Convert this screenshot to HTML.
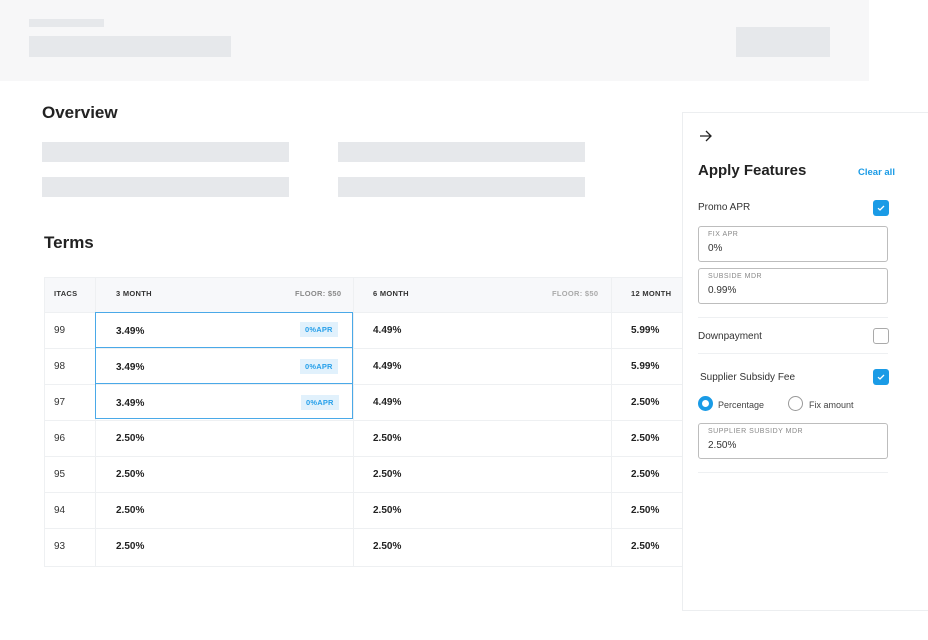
<!DOCTYPE html>
<html><head><style>
*{margin:0;padding:0;box-sizing:border-box}
body{width:928px;height:640px;background:#fff;font-family:"Liberation Sans",sans-serif;color:#222;position:relative;overflow:hidden}
.a{position:absolute}
.ph{position:absolute;background:#e6e8eb}
.cell{position:absolute;font-size:10px;color:#333}
.b{font-weight:bold;color:#222}
.hd{font-size:7.5px;font-weight:bold;letter-spacing:.3px}
.tag{position:absolute;background:#e1f1fc;color:#27a0ea;font-size:7.5px;font-weight:bold;padding:3px 5px;letter-spacing:.2px}
.hl{position:absolute;height:1px;background:#eef0f2}
.vl{position:absolute;width:1px;background:#eef0f2}
.inp{position:absolute;left:698px;width:190px;border:1px solid #bdbdbd;border-radius:3px}
.inp .l{position:absolute;left:9px;top:4px;font-size:7px;color:#888;letter-spacing:.5px}
.inp .v{position:absolute;left:9px;top:16px;font-size:10px;color:#333}
.cb{position:absolute;left:873px;width:16px;height:16px;border-radius:3px;background:#1a9be6}
</style></head><body>
<div class="a" style="left:0;top:0;width:869px;height:81px;background:#f7f7f8"></div>
<div class="ph" style="left:29px;top:19px;width:75px;height:8px"></div>
<div class="ph" style="left:29px;top:36px;width:202px;height:21px"></div>
<div class="ph" style="left:736px;top:27px;width:94px;height:30px"></div>

<div class="a b" style="left:42px;top:103px;font-size:17px">Overview</div>
<div class="ph" style="left:42px;top:142px;width:247px;height:20px"></div>
<div class="ph" style="left:338px;top:142px;width:247px;height:20px"></div>
<div class="ph" style="left:42px;top:177px;width:247px;height:20px"></div>
<div class="ph" style="left:338px;top:177px;width:247px;height:20px"></div>

<div class="a b" style="left:44px;top:233px;font-size:17px">Terms</div>

<div class="a" style="left:44px;top:277px;width:640px;height:35px;background:#f7f8fa"></div>
<div class="hl" style="left:44px;top:277px;width:640px"></div>
<div class="vl" style="left:44px;top:277px;height:290px"></div>
<div class="vl" style="left:95px;top:277px;height:290px"></div>
<div class="vl" style="left:353px;top:277px;height:290px"></div>
<div class="vl" style="left:611px;top:277px;height:290px"></div>
<div class="hl" style="left:44px;top:312px;width:640px"></div>
<div class="hl" style="left:44px;top:348px;width:640px"></div>
<div class="hl" style="left:44px;top:384px;width:640px"></div>
<div class="hl" style="left:44px;top:420px;width:640px"></div>
<div class="hl" style="left:44px;top:456px;width:640px"></div>
<div class="hl" style="left:44px;top:492px;width:640px"></div>
<div class="hl" style="left:44px;top:528px;width:640px"></div>
<div class="hl" style="left:44px;top:566px;width:640px"></div>

<div class="cell hd" style="left:54px;top:289px">ITACS</div>
<div class="cell hd" style="left:116px;top:289px">3 MONTH</div>
<div class="cell hd" style="left:295px;top:289px;color:#888">FLOOR: $50</div>
<div class="cell hd" style="left:373px;top:289px">6 MONTH</div>
<div class="cell hd" style="left:552px;top:289px;color:#aaa">FLOOR: $50</div>
<div class="cell hd" style="left:631px;top:289px">12 MONTH</div>

<div class="a" style="left:95px;top:312px;width:258px;height:107px;border:1px solid #4aa9e8"></div>
<div class="a" style="left:95px;top:347px;width:258px;height:1px;background:#4aa9e8"></div>
<div class="a" style="left:95px;top:383px;width:258px;height:1px;background:#4aa9e8"></div>

<div class="cell" style="left:54px;top:325px">99</div>
<div class="cell" style="left:54px;top:361px">98</div>
<div class="cell" style="left:54px;top:397px">97</div>
<div class="cell" style="left:54px;top:433px">96</div>
<div class="cell" style="left:54px;top:469px">95</div>
<div class="cell" style="left:54px;top:505px">94</div>
<div class="cell" style="left:54px;top:541px">93</div>

<div class="cell b" style="left:116px;top:326px">3.49%</div>
<div class="cell b" style="left:116px;top:362px">3.49%</div>
<div class="cell b" style="left:116px;top:398px">3.49%</div>
<div class="cell b" style="left:116px;top:433px">2.50%</div>
<div class="cell b" style="left:116px;top:469px">2.50%</div>
<div class="cell b" style="left:116px;top:505px">2.50%</div>
<div class="cell b" style="left:116px;top:541px">2.50%</div>
<div class="tag" style="left:300px;top:322px">0%APR</div>
<div class="tag" style="left:300px;top:359px">0%APR</div>
<div class="tag" style="left:301px;top:395px">0%APR</div>

<div class="cell b" style="left:373px;top:325px">4.49%</div>
<div class="cell b" style="left:373px;top:361px">4.49%</div>
<div class="cell b" style="left:373px;top:397px">4.49%</div>
<div class="cell b" style="left:373px;top:433px">2.50%</div>
<div class="cell b" style="left:373px;top:469px">2.50%</div>
<div class="cell b" style="left:373px;top:505px">2.50%</div>
<div class="cell b" style="left:373px;top:541px">2.50%</div>

<div class="cell b" style="left:631px;top:325px">5.99%</div>
<div class="cell b" style="left:631px;top:361px">5.99%</div>
<div class="cell b" style="left:631px;top:397px">2.50%</div>
<div class="cell b" style="left:631px;top:433px">2.50%</div>
<div class="cell b" style="left:631px;top:469px">2.50%</div>
<div class="cell b" style="left:631px;top:505px">2.50%</div>
<div class="cell b" style="left:631px;top:541px">2.50%</div>

<div class="a" style="left:682px;top:112px;width:250px;height:499px;background:#fff;border:1px solid #eceef0"></div>
<svg class="a" style="left:699px;top:130px" width="14" height="12" viewBox="0 0 14 12"><path d="M1 6H12M7 1L12 6L7 11" stroke="#222" stroke-width="1.3" fill="none"/></svg>
<div class="a b" style="left:698px;top:162px;font-size:15px">Apply Features</div>
<div class="a b" style="left:858px;top:167px;font-size:9.5px;color:#1a9be6">Clear all</div>
<div class="a" style="left:698px;top:202px;font-size:10px;color:#333">Promo APR</div>
<div class="cb" style="top:200px"><svg width="16" height="16" viewBox="0 0 16 16"><path d="M5 8.2L7 10L11 6" stroke="#fff" stroke-width="1.3" fill="none"/></svg></div>
<div class="inp" style="top:226px;height:36px"><div class="l">FIX APR</div><div class="v">0%</div></div>
<div class="inp" style="top:268px;height:36px"><div class="l">SUBSIDE MDR</div><div class="v">0.99%</div></div>
<div class="hl" style="left:698px;top:317px;width:190px"></div>
<div class="a" style="left:698px;top:331px;font-size:10px;color:#333">Downpayment</div>
<div class="a" style="left:873px;top:328px;width:16px;height:16px;border:1.5px solid #aaa;border-radius:3px"></div>
<div class="hl" style="left:698px;top:353px;width:190px"></div>
<div class="a" style="left:700px;top:372px;font-size:10px;color:#333">Supplier Subsidy Fee</div>
<div class="cb" style="top:369px"><svg width="16" height="16" viewBox="0 0 16 16"><path d="M5 8.2L7 10L11 6" stroke="#fff" stroke-width="1.3" fill="none"/></svg></div>
<div class="a" style="left:698px;top:396px;width:15px;height:15px;border-radius:50%;border:4px solid #1a9be6"></div>
<div class="a" style="left:718px;top:400px;font-size:9px;color:#444">Percentage</div>
<div class="a" style="left:788px;top:396px;width:15px;height:15px;border-radius:50%;border:1.5px solid #999"></div>
<div class="a" style="left:809px;top:400px;font-size:9px;color:#444">Fix amount</div>
<div class="inp" style="top:423px;height:36px"><div class="l">SUPPLIER SUBSIDY MDR</div><div class="v">2.50%</div></div>
<div class="hl" style="left:698px;top:472px;width:190px"></div>
</body></html>
